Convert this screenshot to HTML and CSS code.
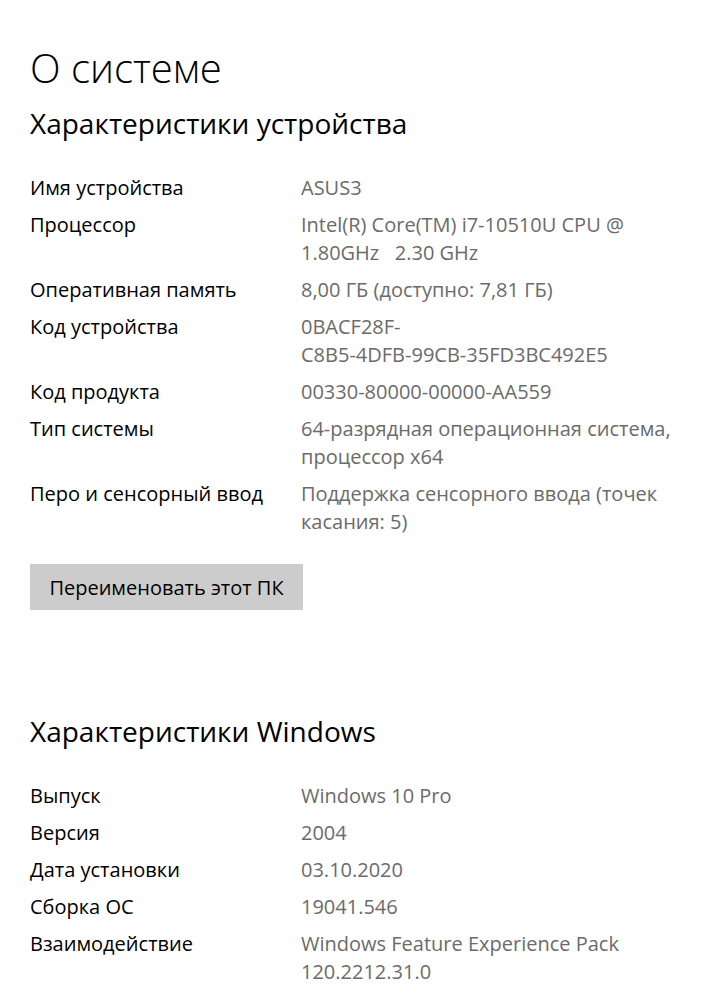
FILE: index.html
```html
<!DOCTYPE html>
<html lang="ru">
	<head>
		<title>О системе</title>
		<meta charset="utf-8">
		<link rel="stylesheet" href="styles.css">
	</head>
	<body>
		<h1 class="page-title">О системе</h1>

		<h2 class="section-title">Характеристики устройства</h2>
		<div class="specs">
			<div class="label">Имя устройства</div>
			<div class="value">ASUS3</div>
			<div class="label">Процессор</div>
			<div class="value">Intel(R) Core(TM) i7-10510U CPU @<br>1.80GHz &nbsp; 2.30 GHz</div>
			<div class="label">Оперативная память</div>
			<div class="value">8,00 ГБ (доступно: 7,81 ГБ)</div>
			<div class="label">Код устройства</div>
			<div class="value">0BACF28F-<br>C8B5-4DFB-99CB-35FD3BC492E5</div>
			<div class="label">Код продукта</div>
			<div class="value">00330-80000-00000-AA559</div>
			<div class="label">Тип системы</div>
			<div class="value">64-разрядная операционная система,<br>процессор x64</div>
			<div class="label">Перо и сенсорный ввод</div>
			<div class="value">Поддержка сенсорного ввода (точек<br>касания: 5)</div>
		</div>

		<button class="btn" type="button">Переименовать этот ПК</button>

		<h2 class="section-title section-title-spaced">Характеристики Windows</h2>
		<div class="specs">
			<div class="label">Выпуск</div>
			<div class="value">Windows 10 Pro</div>
			<div class="label">Версия</div>
			<div class="value">2004</div>
			<div class="label">Дата установки</div>
			<div class="value">03.10.2020</div>
			<div class="label">Сборка ОС</div>
			<div class="value">19041.546</div>
			<div class="label">Взаимодействие</div>
			<div class="value">Windows Feature Experience Pack<br>120.2212.31.0</div>
		</div>
	</body>
</html>
```

FILE: styles.css
```css
body {
	margin: 0;
	padding: 42px 30px 0 30px;
	background-color: #ffffff;
	color: #000000;
	font-family: "Open Sans", "Noto Sans", sans-serif;
	font-size: 20px;
	line-height: 28px;
}

.page-title {
	margin: 0;
	font-size: 40px;
	line-height: 52px;
	font-weight: 300;
}

.section-title {
	margin: 11px 0 33px 0;
	font-size: 28px;
	line-height: 36px;
	font-weight: 400;
}

.section-title-spaced {
	margin-top: 103px;
	margin-bottom: 33px;
}

.specs {
	display: grid;
	grid-template-columns: 271px 370px;
	row-gap: 9px;
}

.value {
	color: #6b6b6b;
}

.btn {
	display: block;
	margin-top: 28px;
	width: 273px;
	height: 46px;
	padding: 0;
	border: 0;
	background-color: #cccccc;
	color: #000000;
	font-family: inherit;
	font-size: 20px;
}
```
